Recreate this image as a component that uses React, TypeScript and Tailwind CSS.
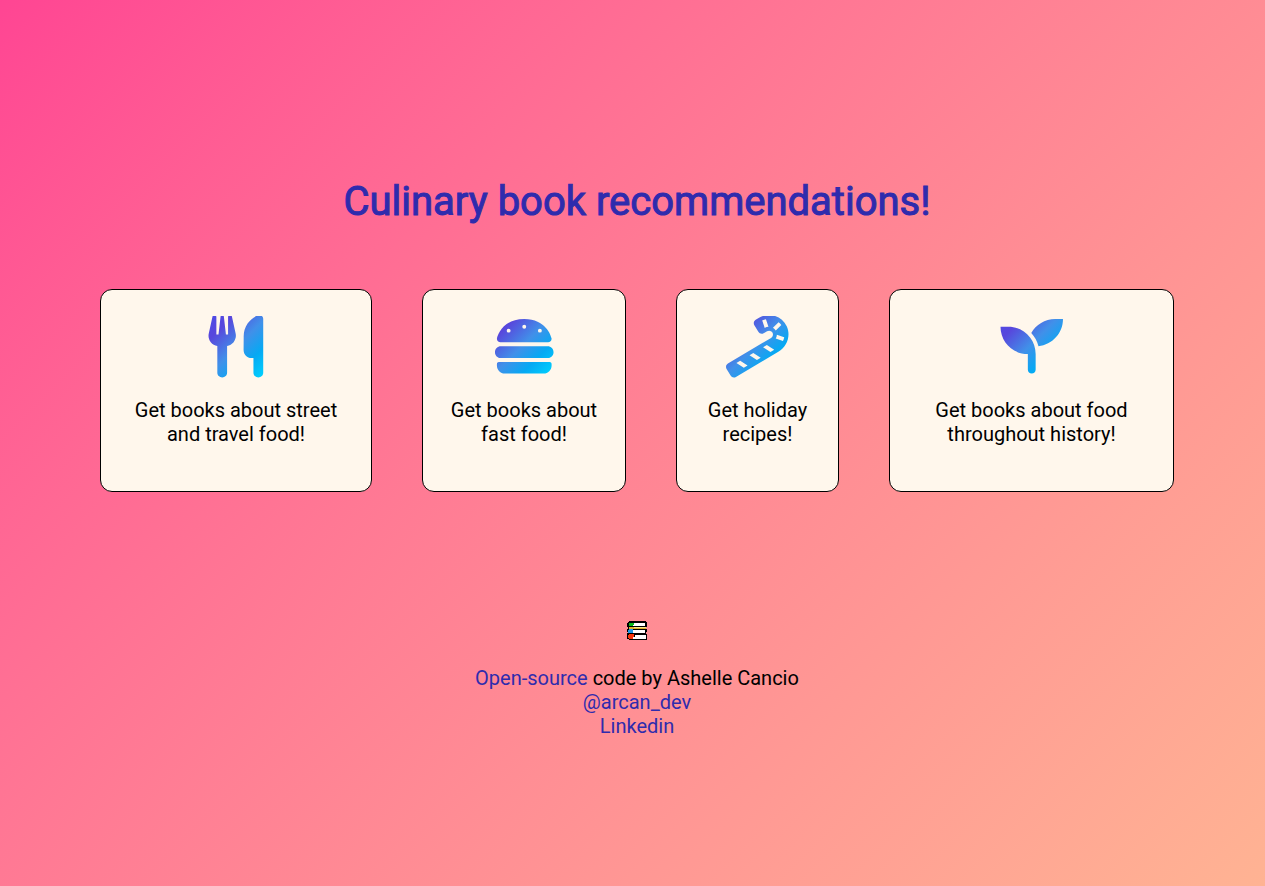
import type { ReactNode } from "react";

type IconProps = { id: string; width: string; viewBox: string; d: string };

function GradientIcon({ id, width, viewBox, d }: IconProps) {
  return (
    <svg className={`${width} h-[62px]`} viewBox={viewBox} aria-hidden="true">
      <defs>
        <linearGradient id={id} gradientUnits="userSpaceOnUse" x1="0" y1="0" x2="512" y2="512">
          <stop offset="0" stopColor="#4b4be8" />
          <stop offset="0.2" stopColor="#5847dc" />
          <stop offset="0.48" stopColor="#4190e9" />
          <stop offset="0.7" stopColor="#06a9f3" />
          <stop offset="0.95" stopColor="#00d4ff" />
        </linearGradient>
      </defs>
      <path fill={`url(#${id})`} fillRule="evenodd" d={d} />
    </svg>
  );
}

const cards: { text: string; icon: IconProps }[] = [
  {
    text: "Get books about street and travel food!",
    icon: {
      id: "utensils",
      width: "w-14",
      viewBox: "-4 8 458 508",
      d: "M221.6 148.7C224.7 161.3 224.8 174.5 222.1 187.2C219.3 199.1 213.6 211.9 205.6 222.1C191.1 238.6 173 249.1 152 254.1V472C152 482.6 147.8 492.8 140.3 500.3C132.8 507.8 122.6 512 112 512C101.4 512 91.2 507.8 83.7 500.3C76.2 492.8 72 482.6 72 472V254.1C51 250.1 32 238.9 18.3 222.4C10.2 212.2 4.5 199.3 1.8 187.5C-1 174.7-.8 161.5 2.3 148.8L32.5 12.5C33.4 8.6 35.6 5.2 38.8 2.9C42 .6 46-.4 49.9 0C53.8 .4 57.5 2.3 60.1 5.3C62.7 8.2 64.2 12 64.2 16V160H81.5L98.6 11.9C99 8.6 100.6 5.6 103.1 3.4C105.5 1.2 108.7 0 112 0C115.3 0 118.5 1.2 120.9 3.4C123.4 5.6 125 8.6 125.4 11.9L142.5 160H160V16C160 12 161.4 8.3 164 5.3C166.6 2.4 170.2 .5 174.1 0C178-.4 182 .6 185.2 2.9C188.4 5.3 190.6 8.7 191.5 12.6L221.6 148.7zM448 472C448 482.6 443.8 492.8 436.3 500.3C428.8 507.8 418.6 512 408 512C397.4 512 387.2 507.8 379.7 500.3C372.2 492.8 368 482.6 368 472V352H351.2C342.8 352 334.4 350.3 326.6 347.1C318.9 343.8 311.8 339.1 305.8 333.1C299.9 327.1 295.2 320 292 312.2C288.8 304.4 287.2 296 287.2 287.6L288 173.8C288 136.9 299.1 100.8 319.8 70.3C340.5 39.7 369.8 16 404.1 2.3C409 .4 414.2-.3 419.4 .2C424.6 .8 429.6 2.6 433.9 5.5C438.2 8.5 441.8 12.4 444.2 17C446.7 21.6 448 26.8 448 32V472z",
    },
  },
  {
    text: "Get books about fast food!",
    icon: {
      id: "burger",
      width: "w-[63px]",
      viewBox: "0 8 516 508",
      d: "M61.1 224C45 224 32 211 32 194.9c0-1.9 .2-3.7 .6-5.6C37.9 168.3 78.8 32 256 32s218.1 136.3 223.4 157.3c.5 1.9 .6 3.7 .6 5.6c0 16.1-13 29.1-29.1 29.1H61.1zM144 128a16 16 0 1 0 -32 0 16 16 0 1 0 32 0zm240 16a16 16 0 1 0 0-32 16 16 0 1 0 0 32zM272 96a16 16 0 1 0 -32 0 16 16 0 1 0 32 0zM16 304c0-26.5 21.5-48 48-48H448c26.5 0 48 21.5 48 48s-21.5 48-48 48H64c-26.5 0-48-21.5-48-48zm16 96c0-8.8 7.2-16 16-16H464c8.8 0 16 7.2 16 16v16c0 35.3-28.7 64-64 64H96c-35.3 0-64-28.7-64-64V400z",
    },
  },
  {
    text: "Get holiday recipes!",
    icon: {
      id: "candy-cane",
      width: "w-[63px]",
      viewBox: "0 8 516 508",
      d: "M497.5 92C469.6 33.1 411.8 0 352.4 0c-27.9 0-56.1 7.3-81.8 22.6L243.1 39C227.9 48.1 223 67.8 232.1 82.9l32.8 54.9c8.5 14.2 27.6 20.6 43.9 11.1l27.5-16.4c5.1-3.1 10.9-4.5 16.5-4.5c10.9 0 21.4 5.6 27.4 15.6c9 15.1 3.9 34.6-11.1 43.7L15.6 397.6c-15.2 9.1-20.1 28.6-11 43.9l32.8 54.9c8.5 14.2 27.6 20.7 43.9 11.1l347.4-206.5C500.2 258.1 533.2 167.5 497.5 92zM319.7 105L317.2 106.5l-20.5-61.5c9.8-4.8 19.9-8.1 30.4-10.3l20.6 61.9C337.8 97.4 328.2 99.9 319.7 105zM145.8 431.7l-60.5-38.5l30.9-18.2l60.5 38.5L145.8 431.7zM253.3 367.9l-60.5-38.5l30.9-18.2l60.5 38.5L253.3 367.9zM364.2 302L303.7 263.5l30.9-18.2l60.5 38.5L364.2 302zM384.7 104.7l46-46c8.4 6.5 16 14 22.5 22.5l-45.6 45.8C401.9 117.8 393.9 110 384.7 104.7zM466.7 212.5l-59.5-19.8c3.3-5.4 5.9-11 7.5-17.1c1-4.5 1.6-9.1 1.8-13.6l60.4 20.1C474.7 192.5 471.4 202.7 466.7 212.5z",
    },
  },
  {
    text: "Get books about food throughout history!",
    icon: {
      id: "seedling",
      width: "w-[63px]",
      viewBox: "-4 8 516 508",
      d: "M64 96H0c0 123.8 100.2 224 224 224v128c0 17.7 14.3 32 32 32s32-14.3 32-32V320C288 196.3 187.8 96 64 96zM448 32c-84.3 0-157.5 46.5-195.8 115.3c27.8 30.1 48.3 66.9 59 107.6C424 243.1 512 148 512 32H448z",
    },
  },
];

function FooterLink({ href, children }: { href: string; children: ReactNode }) {
  return (
    <a href={href} className="text-[#2f2bad]">
      {children}
    </a>
  );
}

function Books() {
  return (
    <svg className="h-6 w-6" viewBox="0 0 24 24" role="img" aria-label="Books">
      <path d="M4 3h17v1h1v5h-1v2h1v3h-1v2h1v6H4v-1H2v-6h1v-1H2v-3h1v-2H2V5h1V4h1z" fill="#000" />
      <path d="M4 5h5v3H4z" fill="#08b818" />
      <path d="M9 5h11v3H8V7h1z" fill="#fff" />
      <path d="M4 9h17v2H4z" fill="#e0b028" />
      <path d="M9 9h12v1H9z" fill="#f6e98c" />
      <path d="M4 11h4v4H3v-3h1z" fill="#1c98e8" />
      <path d="M8 12h12v3H8z" fill="#fff" />
      <path d="M4 16h5v5H4v-1H3v-3h1z" fill="#f8350c" />
      <path d="M10 17h11v4H8v-2h2z" fill="#fff" />
    </svg>
  );
}

export default function App() {
  return (
    <div className="min-h-screen bg-linear-135 from-[#ff4593] to-[#ffb393] pt-[177px] pr-[91px] pb-16 pl-[100px] text-center font-[Roboto,sans-serif] text-xl leading-6 text-black">
      <h1 className="text-[40px] leading-[50px] font-normal text-[#2f2bad] [-webkit-text-stroke:1px_#2f2bad]">
        Culinary book recommendations!
      </h1>
      <main className="mt-[62px] grid grid-cols-[272fr_204fr_163fr_285fr] gap-[50px]">
        {cards.map(({ text, icon }) => (
          <button
            key={icon.id}
            type="button"
            className="flex h-[203px] cursor-pointer flex-col items-center gap-5 rounded-xl border border-black bg-[#fff7ec] px-6 pt-[26px]"
          >
            <GradientIcon {...icon} />
            <span>{text}</span>
          </button>
        ))}
      </main>
      <footer className="mt-[126px] flex flex-col items-center">
        <Books />
        <p className="mt-6">
          <FooterLink href="#source">Open-source</FooterLink> code by Ashelle Cancio
        </p>
        <FooterLink href="#twitter">@arcan_dev</FooterLink>
        <FooterLink href="#linkedin">Linkedin</FooterLink>
      </footer>
    </div>
  );
}
